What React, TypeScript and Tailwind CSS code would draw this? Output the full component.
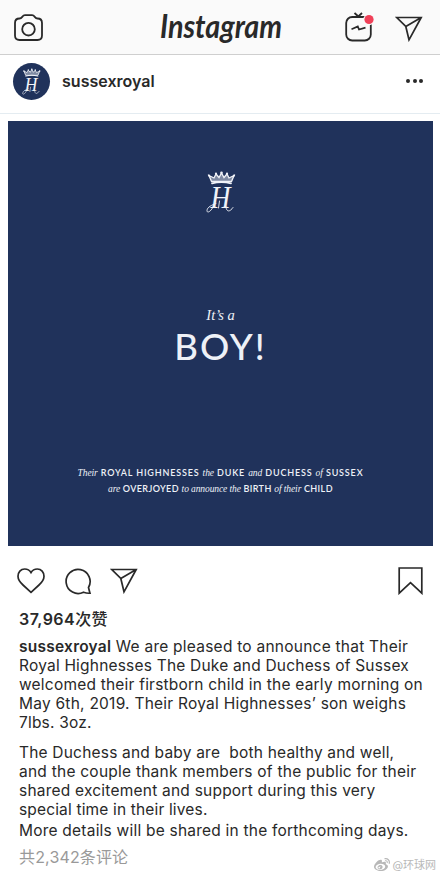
import React from "react";
import { FaWeibo } from "react-icons/fa";

const ui = "font-['Inter','Noto_Sans_CJK_SC',sans-serif]";

function Emblem({ className }: { className: string }) {
  return (
    <svg className={`overflow-visible ${className}`} viewBox="0 0 30 42" fill="none" stroke="#f1f3f8" strokeLinecap="round">
      <path d="M5.500 10.500 3 4.500 8 7 10 3 13 6.500 15.500 2 18 6.500 21 3 23 7 28 4.500 25.500 10.500Z" fill="#f1f3f8" fillOpacity=".45" strokeWidth="1.300" />
      <path d="M6 12.300Q15.500 9.800 25 12.300" strokeWidth="1.800" />
      <g fill="#f1f3f8" stroke="none">
        <circle cx="3" cy="4.500" r="1.100" /><circle cx="10" cy="2.700" r="1.100" /><circle cx="15.500" cy="1.700" r="1.300" /><circle cx="21" cy="2.700" r="1.100" /><circle cx="28" cy="4.500" r="1.100" />
      </g>
      <text x="4.500" y="36.500" fill="#f1f3f8" stroke="none" fontSize="31" fontStyle="italic" fontFamily="Liberation Serif, serif" textLength="20" lengthAdjust="spacingAndGlyphs">H</text>
      <path d="M7.500 35C5 41 .8 42.500 1 39.500 1.200 36 6 34 10 32.500M20 36C20.500 41.500 24 41 27 36.500M13.500 30 12.500 37" strokeWidth=".9" />
    </svg>
  );
}

function Plane({ className }: { className: string }) {
  return (
    <svg className={className} viewBox="0 0 28 26" fill="none" stroke="#292929" strokeWidth="1.700">
      <path d="M1.800 1.500H26.200L14 23.800 10.800 10.500ZM10.800 10.500 26.200 1.500" />
    </svg>
  );
}

function Header() {
  return (
    <header className="flex h-[55px] items-center border-b border-[#cfcfcf] bg-[#fafafa]">
      <svg className="ml-[14px] h-[27px] w-[29px] shrink-0" viewBox="0 0 29 27" fill="none" stroke="#292929" strokeWidth="1.800">
        <path d="M5.500 4.500C8.500 4.500 8 1.200 11 1.200H18C21 1.200 20.500 4.500 23.500 4.500Q28 4.500 28 9V21.500Q28 26 23.500 26H5.500Q1 26 1 21.500V9Q1 4.500 5.500 4.500Z" />
        <circle cx="14.500" cy="15.200" r="6.300" />
      </svg>
      <svg className="ml-[113px] h-[54px] w-[130px] shrink-0 overflow-visible" viewBox="0 0 130 54">
        <text x="4" y="37.500" fill="#292929" fontSize="32" fontWeight="700" fontStyle="italic" fontFamily="Lato, sans-serif" textLength="122" lengthAdjust="spacingAndGlyphs">Instagram</text>
      </svg>
      <svg className="ml-[58px] h-[30px] w-[30px] shrink-0" viewBox="0 0 30 30" fill="none" stroke="#292929" strokeWidth="1.800">
        <path d="M10.500 1 14.300 4.500 18 1" />
        <rect x="2.200" y="5" width="24.600" height="23.500" rx="6" />
        <path d="M7.500 17.300 13.800 14.500 15 17.500 21.500 15.600" strokeWidth="1.700" />
        <circle cx="25" cy="7.500" r="5.700" fill="#fafafa" stroke="none" />
        <circle cx="25" cy="7.500" r="4.600" fill="#f04058" stroke="none" />
      </svg>
      <Plane className="mt-[3px] ml-[21px] h-[26px] w-[28px] shrink-0" />
    </header>
  );
}

function Account() {
  return (
    <div className="flex h-[59px] items-center border-b border-[#e4ecf1] pb-[6px]">
      <div className="ml-[13px] flex size-[37px] items-center justify-center rounded-full bg-[#20325b]">
        <Emblem className="h-[27px] w-[19px]" />
      </div>
      <span className="ml-[12px] text-[16px] leading-5 font-semibold tracking-[0.02px]">sussexroyal</span>
      <div className="mr-[17px] ml-auto flex gap-[2.500px]">
        <i className="size-[4px] rounded-full bg-[#292929]" />
        <i className="size-[4px] rounded-full bg-[#292929]" />
        <i className="size-[4px] rounded-full bg-[#292929]" />
      </div>
    </div>
  );
}

function Em({ children }: { children: React.ReactNode }) {
  return <em className="font-['Liberation_Serif',serif] text-[9.500px] font-normal tracking-[-0.1px]">{children}</em>;
}

function Photo() {
  return (
    <div className="mt-[7px] ml-[8px] flex h-[425px] w-[425px] flex-col items-center bg-[#20325b] text-[#eef1f7]">
      <Emblem className="mt-[50px] h-[42px] w-[30px]" />
      <div className="mt-[93px] font-['Liberation_Serif',serif] text-[14.500px] leading-[18px] italic">It’s a</div>
      <div className="mt-[1px] font-['Lato',sans-serif] text-[36.500px] leading-[42px] font-medium tracking-[2px]">BOY!</div>
      <div className="mt-[98px] font-['Lato',sans-serif] text-[9px] leading-[16px] font-semibold tracking-[0.84px] whitespace-nowrap">
        <Em>Their</Em> ROYAL HIGHNESSES <Em>the</Em> DUKE <Em>and</Em> DUCHESS <Em>of</Em> SUSSEX
      </div>
      <div className="font-['Lato',sans-serif] text-[9px] leading-[16px] font-semibold tracking-[0.4px] whitespace-nowrap">
        <Em>are</Em> OVERJOYED <Em>to announce the</Em> BIRTH <Em>of their</Em> CHILD
      </div>
    </div>
  );
}

function Actions() {
  return (
    <div className="mt-[20px] flex h-[30px] items-center pl-[17px]">
      <svg className="h-[26px] w-[28px]" viewBox="0 0 28 26" fill="none" stroke="#292929" strokeWidth="1.700">
        <path d="M14 4.500C15.500 2 17.800 1 20.300 1 24.300 1 27 4.200 27 8.300 27 12 24.800 14.500 22 17L14 24.300 6 17C3.200 14.500 1 12 1 8.300 1 4.200 3.700 1 7.700 1 10.200 1 12.500 2 14 4.500Z" />
      </svg>
      <svg className="ml-[20px] h-[27px] w-[27px]" viewBox="0 0 27 27" fill="none" stroke="#292929" strokeWidth="1.700">
        <path d="M23.500 19.500A12 12 0 1 0 18.500 24.200Q22 25.500 25 25.200 24.200 22.500 23.500 19.500Z" />
      </svg>
      <Plane className="ml-[18px] h-[26px] w-[28px]" />
      <svg className="ml-[260px] h-[28px] w-[25px]" viewBox="0 0 25 28" fill="none" stroke="#292929" strokeWidth="1.700">
        <path d="M1.200 1H23.800V26.200L12.500 15.700 1.200 26.200Z" />
      </svg>
    </div>
  );
}

function Caption() {
  return (
    <div className="pl-[19px] text-[15.500px] leading-[19px] whitespace-pre">
      <div className="mt-[13px] text-[16px] leading-[20px] font-semibold tracking-[0.45px]">37,964<span className="font-medium">次赞</span></div>
      <div className="mt-[8px] tracking-[0.24px]"><b className="font-semibold">sussexroyal</b> We are pleased to announce that Their</div>
      <div className="tracking-[0.2px]">Royal Highnesses The Duke and Duchess of Sussex</div>
      <div className="tracking-[0.21px]">welcomed their firstborn child in the early morning on</div>
      <div className="tracking-[0.24px]">May 6th, 2019. Their Royal Highnesses’ son weighs</div>
      <div className="tracking-[0.2px]">7lbs. 3oz.</div>
      <div className="mt-[11px] tracking-[0.2px]">The Duchess and baby are  both healthy and well,</div>
      <div className="tracking-[0.24px]">and the couple thank members of the public for their</div>
      <div className="tracking-[0.22px]">shared excitement and support during this very</div>
      <div className="tracking-[0.16px]">special time in their lives.</div>
      <div className="mt-[2px] tracking-[0.22px]">More details will be shared in the forthcoming days.</div>
    </div>
  );
}

function Footer() {
  return (
    <div className="mt-[6px] flex h-[29px] items-start justify-between pr-[4px] pl-[19px]">
      <span className="text-[16px] leading-[22px] tracking-[0.15px] text-[#999]">共2,342条评论</span>
      <span className="mt-[11px] flex items-center gap-[2px] text-[11px] leading-[16px] text-[#b8b8b8]">
        <FaWeibo size={16} />@环球网
      </span>
    </div>
  );
}

export default function App() {
  return (
    <main className={`h-[875px] w-[440px] overflow-hidden bg-white text-[#292929] ${ui}`}>
      <Header />
      <Account />
      <Photo />
      <Actions />
      <Caption />
      <Footer />
    </main>
  );
}
